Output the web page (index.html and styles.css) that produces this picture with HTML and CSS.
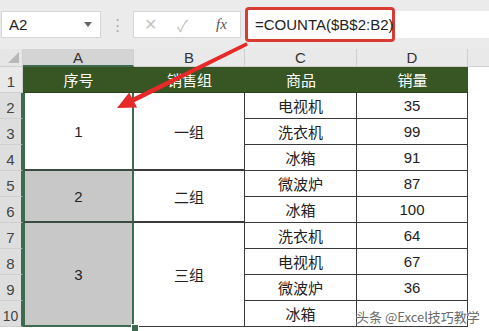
FILE: index.html
```html
<!DOCTYPE html>
<html lang="zh-CN">
<head>
    <meta charset="UTF-8">
    <title>COUNTA</title>
    <link rel="stylesheet" href="styles.css">
</head>
<body>
    <div class="app">
        <div class="toolbar">
            <div class="name-box">
                <span>A2</span>
                <span class="caret"></span>
            </div>
            <div class="grip">⋮</div>
            <div class="fx-box">
                <span class="fx-btn">✕</span>
                <span class="fx-btn">✓</span>
                <span class="fx-label">fx</span>
            </div>
            <div class="formula-bar">
                <div class="formula-mark">=COUNTA($B$2:B2)</div>
            </div>
        </div>

        <div class="sheet">
            <div class="corner"><span class="corner-tri"></span></div>
            <div class="col-head sel">A</div>
            <div class="col-head">B</div>
            <div class="col-head">C</div>
            <div class="col-head">D</div>
            <div class="col-head empty"></div>

            <div class="row-head r1">1</div>
            <div class="row-head sel r2">2</div>
            <div class="row-head sel r3">3</div>
            <div class="row-head sel r4">4</div>
            <div class="row-head sel r5">5</div>
            <div class="row-head sel r6">6</div>
            <div class="row-head sel r7">7</div>
            <div class="row-head sel r8">8</div>
            <div class="row-head sel r9">9</div>
            <div class="row-head sel r10">10</div>

            <div class="cell th">序号</div>
            <div class="cell th">销售组</div>
            <div class="cell th">商品</div>
            <div class="cell th">销量</div>
            <div class="cell blank"></div>

            <div class="cell seq active span3">1</div>
            <div class="cell group span3">一组</div>
            <div class="cell">电视机</div>
            <div class="cell">35</div>
            <div class="cell blank"></div>
            <div class="cell">洗衣机</div>
            <div class="cell">99</div>
            <div class="cell blank"></div>
            <div class="cell">冰箱</div>
            <div class="cell">91</div>
            <div class="cell blank"></div>

            <div class="cell seq span2">2</div>
            <div class="cell group span2">二组</div>
            <div class="cell">微波炉</div>
            <div class="cell">87</div>
            <div class="cell blank"></div>
            <div class="cell">冰箱</div>
            <div class="cell">100</div>
            <div class="cell blank"></div>

            <div class="cell seq last span4">3</div>
            <div class="cell group last span4">三组</div>
            <div class="cell">洗衣机</div>
            <div class="cell">64</div>
            <div class="cell blank"></div>
            <div class="cell">电视机</div>
            <div class="cell">67</div>
            <div class="cell blank"></div>
            <div class="cell">微波炉</div>
            <div class="cell">36</div>
            <div class="cell blank"></div>
            <div class="cell">冰箱</div>
            <div class="cell"></div>
            <div class="cell blank"></div>
        </div>

        <span class="fill-handle"></span>

        <svg class="arrow" width="489" height="331" viewBox="0 0 489 331">
            <polygon points="246.3,42.2 132.0,97.9 129.2,92.4 117,108 137.2,107.6 134.2,102.3 247.9,45.6" fill="#e62a2a"/>
        </svg>

        <div class="watermark">头条 @Excel技巧教学</div>
    </div>
</body>
</html>
```

FILE: styles.css
```css
body {
    margin: 0;
    font-family: "Liberation Sans", "Noto Sans CJK SC", sans-serif;
    background: #fff;
}
.app {
    position: relative;
    width: 489px;
    height: 331px;
    overflow: hidden;
}
.toolbar {
    display: flex;
    align-items: center;
    height: 49px;
    background: #ebebeb;
    box-sizing: border-box;
    padding-left: 1px;
}
.name-box {
    display: flex;
    align-items: center;
    justify-content: space-between;
    width: 100px;
    height: 27px;
    background: #fff;
    border: 1px solid #d6d6d6;
    box-sizing: border-box;
    padding: 0 8px 0 7px;
    font-size: 15px;
    color: #222;
}
.caret {
    width: 0;
    height: 0;
    border-left: 4px solid transparent;
    border-right: 4px solid transparent;
    border-top: 5px solid #666;
}
.grip {
    width: 32px;
    text-align: center;
    color: #aaa;
    font-size: 15px;
}
.fx-box {
    display: flex;
    align-items: center;
    width: 108px;
    height: 27px;
    background: #fff;
    border: 1px solid #d6d6d6;
    box-sizing: border-box;
    padding-left: 10px;
}
.fx-btn {
    width: 33px;
    color: #c4c4c4;
    font-size: 16px;
}
.fx-label {
    margin-left: 6px;
    font-family: "Liberation Serif", serif;
    font-style: italic;
    font-size: 15px;
    color: #555;
}
.formula-bar {
    flex: 1;
    height: 27px;
    margin-left: 5px;
    background: #fff;
    display: flex;
    align-items: center;
}
.formula-mark {
    height: 35px;
    width: 150px;
    margin-left: -1px;
    box-sizing: border-box;
    border: 3px solid #d93a33;
    border-radius: 4px;
    background: #fff;
    display: flex;
    align-items: center;
    padding-left: 7px;
    font-size: 15px;
    color: #222;
}
.sheet {
    display: grid;
    grid-template-columns: 23px 111px 111px 112px 111px 1fr;
    grid-template-rows: 18px repeat(10, 26px);
    grid-auto-flow: row dense;
}
.corner {
    background: #e6e6e6;
    border-right: 1px solid #cfcfcf;
    border-bottom: 1px solid #cfcfcf;
    position: relative;
}
.corner-tri {
    position: absolute;
    right: 3px;
    bottom: 3px;
    width: 0;
    height: 0;
    border-left: 11px solid transparent;
    border-bottom: 11px solid #b8b8b8;
}
.col-head {
    background: #e9e9e9;
    border-right: 1px solid #cfcfcf;
    border-bottom: 1px solid #cfcfcf;
    box-sizing: border-box;
    text-align: center;
    font-size: 15px;
    line-height: 18px;
    color: #333;
}
.col-head.sel {
    background: #d4d4d4;
    border-bottom: 2px solid #3e6b50;
}
.col-head.empty {
    border-right: none;
}
.row-head {
    grid-column: 1;
    background: #e9e9e9;
    border-bottom: 1px solid #cfcfcf;
    border-right: 1px solid #cfcfcf;
    box-sizing: border-box;
    text-align: center;
    font-size: 15px;
    line-height: 30px;
    color: #444;
}
.row-head.sel {
    background: #dedede;
    border-right: 2px solid #3e6b50;
}
.r1 { grid-row: 2; }
.r2 { grid-row: 3; }
.r3 { grid-row: 4; }
.r4 { grid-row: 5; }
.r5 { grid-row: 6; }
.r6 { grid-row: 7; }
.r7 { grid-row: 8; }
.r8 { grid-row: 9; }
.r9 { grid-row: 10; }
.r10 { grid-row: 11; font-size: 14px; }
.cell {
    display: flex;
    align-items: center;
    justify-content: center;
    box-sizing: border-box;
    border-right: 1px solid #3a3a3a;
    border-bottom: 1px solid #3a3a3a;
    background: #fff;
    font-size: 15px;
    color: #222;
}
.cell.th {
    background: #375623;
    color: #fff;
    border-right: none;
    border-bottom: 1px solid #2c4520;
}
.cell.blank {
    border: none;
    background: #fff;
}
.cell.seq {
    grid-column: 2;
    background: #c8c8c8;
    border-left: 2px solid #3e6b50;
    border-right: 2px solid #3e6b50;
    border-bottom: 2px solid #3a4a40;
}
.cell.seq.active {
    background: #fff;
}
.cell.seq.last {
    border-bottom: 2px solid #3e6b50;
}
.cell.group {
    grid-column: 3;
    border-bottom: 2px solid #3a3a3a;
}
.cell.group.last {
    border-bottom: 1px solid #3a3a3a;
}
.span2 { grid-row: span 2; }
.span3 { grid-row: span 3; }
.span4 { grid-row: span 4; }
.fill-handle {
    position: absolute;
    left: 131px;
    top: 324px;
    width: 6px;
    height: 6px;
    background: #3e6b50;
    border: 1px solid #fff;
}
.arrow {
    position: absolute;
    left: 0;
    top: 0;
    pointer-events: none;
}
.watermark {
    position: absolute;
    left: 356px;
    top: 307px;
    font-family: "Noto Sans CJK SC", sans-serif;
    font-size: 13px;
    color: #6a6a6a;
    text-shadow: 0 0 2px #fff, 0 0 2px #fff;
}
```
